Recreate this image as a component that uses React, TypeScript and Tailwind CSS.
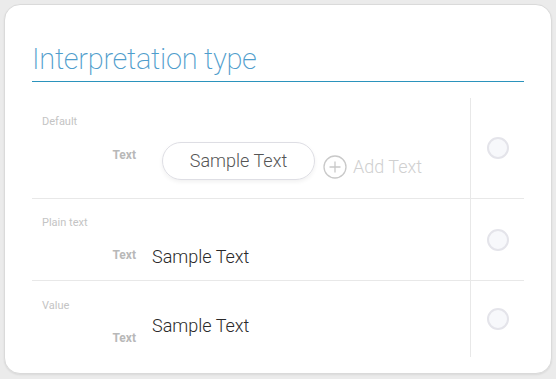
import React from "react";

function Radio() {
  return <div className="w-[22px] h-[22px] rounded-full border-2 border-[#e4e4ea] bg-[#f7f8fb]" />;
}

function FieldLabel({ children }: { children: React.ReactNode }) {
  return (
    <div className="w-[104px] shrink-0 text-right text-[12px] leading-[14px] font-bold text-[#b8b8b8]">{children}</div>
  );
}

export default function App() {
  return (
    <div className="w-[556px] h-[379px] bg-[#ebebeb] pt-[4px] pl-[4px] font-['Roboto',sans-serif]">
      <div className="w-[548px] h-[370px] bg-white rounded-[16px] border border-[#dadada] shadow-[0_1px_2px_rgba(0,0,0,0.08)] pt-[37px] px-[27px]">
        {/* Title */}
        <div className="pb-[5px]">
          <h1 className="text-[29px] leading-[34px] font-extralight tracking-[-0.3px] text-[#4f9dcc]">
            Interpretation type
          </h1>
        </div>
        <div className="h-px bg-[#2b93bc]" />

        {/* Table */}
        <div className="mt-[16px]">
          {/* Default */}
          <div className="flex border-b border-[#e8e8e8]">
            <div className="w-[439px] border-r border-[#e8e8e8] pt-[17px] pb-[18px]">
              <div className="pl-[10px] text-[11px] leading-[13px] text-[#c4c4c4]">Default</div>
              <div className="flex items-start mt-[14px]">
                <div className="mt-[6px]">
                  <FieldLabel>Text</FieldLabel>
                </div>
                <div className="ml-[26px] h-[38px] w-[153px] rounded-full border border-[#dedee4] shadow-[0_2px_4px_rgba(0,0,0,0.06)] flex items-center justify-center text-[18px] leading-[22px] font-light text-[#555]">
                  Sample Text
                </div>
                <div className="ml-[8px] mt-[13px] h-[24px] flex items-center gap-[6px]">
                  <svg width="24" height="24" viewBox="0 0 24 24" fill="none" stroke="#c9c9c9" strokeWidth="1.3">
                    <circle cx="12" cy="12" r="11" />
                    <path d="M12 6.5v11M6.5 12h11" />
                  </svg>
                  <span className="text-[18px] leading-[22px] font-light text-[#d0d0d0]">Add Text</span>
                </div>
              </div>
            </div>
            <div className="flex-1 flex items-center justify-center">
              <Radio />
            </div>
          </div>

          {/* Plain text */}
          <div className="flex border-b border-[#e8e8e8]">
            <div className="w-[439px] border-r border-[#e8e8e8] pt-[17px] pb-[12px]">
              <div className="pl-[10px] text-[11px] leading-[13px] text-[#c4c4c4]">Plain text</div>
              <div className="flex items-start mt-[17px]">
                <div className="mt-[2px]">
                  <FieldLabel>Text</FieldLabel>
                </div>
                <div className="ml-[16px] text-[18px] leading-[22px] font-light text-[#2a2a2a]">Sample Text</div>
              </div>
            </div>
            <div className="flex-1 flex items-center justify-center">
              <Radio />
            </div>
          </div>

          {/* Value */}
          <div className="flex">
            <div className="w-[439px] border-r border-[#e8e8e8] pt-[18px] pb-[12px]">
              <div className="pl-[10px] text-[11px] leading-[13px] text-[#c4c4c4]">Value</div>
              <div className="flex items-start mt-[3px]">
                <div className="mt-[16px]">
                  <FieldLabel>Text</FieldLabel>
                </div>
                <div className="ml-[16px] text-[18px] leading-[22px] font-light text-[#2a2a2a]">Sample Text</div>
              </div>
            </div>
            <div className="flex-1 flex items-center justify-center">
              <Radio />
            </div>
          </div>
        </div>
      </div>
    </div>
  );
}
